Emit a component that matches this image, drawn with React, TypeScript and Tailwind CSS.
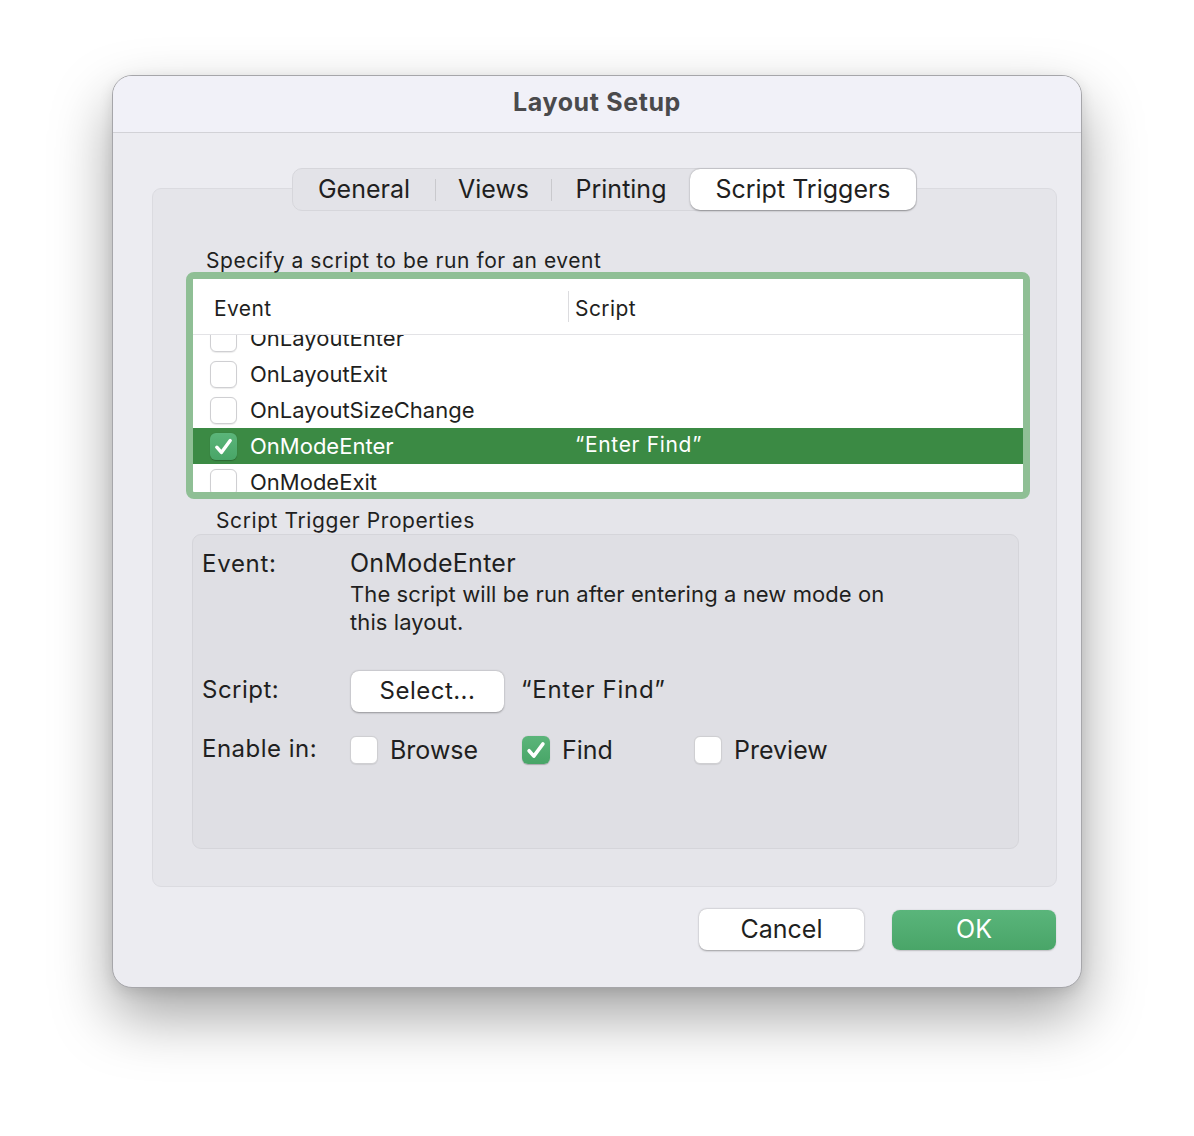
import React from "react";

const font = { fontFamily: "Inter, 'Noto Sans', sans-serif" };

function Check({ size = 27 }: { size?: number }) {
  return (
    <svg width={size} height={size} viewBox="0 0 27 27" className="block">
      <path d="M6.8 14.2 L11.4 19.4 L20.2 7.6" fill="none" stroke="white" strokeWidth="3.4" strokeLinecap="round" strokeLinejoin="round" />
    </svg>
  );
}

function Box({ checked, size }: { checked?: boolean; size: "s" | "m" }) {
  const dim = size === "s" ? "w-[27px] h-[27px]" : "w-[28px] h-[28px]";
  if (checked) {
    return (
      <div className={`${dim} shrink-0 rounded-[6px] bg-gradient-to-b from-[#5bb57a] to-[#48a567] shadow-[0_0.5px_1px_rgba(0,0,0,0.25)] flex items-center justify-center`}>
        <Check size={size === "s" ? 27 : 28} />
      </div>
    );
  }
  return (
    <div className={`${dim} shrink-0 rounded-[6px] bg-white border border-[#cfcfd2] shadow-[0_0.5px_1px_rgba(0,0,0,0.08)]`} />
  );
}

const rows = [
  { name: "OnLayoutEnter" },
  { name: "OnLayoutExit" },
  { name: "OnLayoutSizeChange" },
  { name: "OnModeEnter", checked: true, selected: true, script: "\u201cEnter Find\u201d" },
  { name: "OnModeExit" },
];

export default function App() {
  return (
    <div className="w-full h-[1136px] bg-white pt-[75px] pl-[112px] text-[#1f1f21]" style={font}>
      <div className="w-[970px] h-[913px] rounded-[20px] border border-[#a6a6aa] bg-[#ececf1] overflow-hidden shadow-[0_28px_60px_rgba(0,0,0,0.36),0_4px_14px_rgba(0,0,0,0.10)]">
        {/* title bar */}
        <div className="h-[57px] bg-[#f1f1f8] border-b border-[#d2d2d7] flex items-center justify-center pb-[4px]">
          <span className="text-[25px] font-bold text-[#4a4a4c] tracking-[0.025em] leading-none">Layout Setup</span>
        </div>

        <div className="pl-[39px] pt-[35px]">
          {/* tabs */}
          <div className="w-[905px] flex justify-center relative z-10">
            <div className="h-[43px] flex items-stretch rounded-[10px] border border-[#d6d6db] bg-[#e3e3e8] text-[25px] leading-none">
              <div className="w-[142px] flex items-center justify-center">General</div>
              <div className="w-px self-center h-[22px] bg-[#c9c9cd]" />
              <div className="w-[115px] flex items-center justify-center">Views</div>
              <div className="w-px self-center h-[22px] bg-[#c9c9cd]" />
              <div className="w-[138px] flex items-center justify-center">Printing</div>
              <div className="w-[226px] flex items-center justify-center bg-white rounded-[10px] shadow-[0_0.5px_2px_rgba(0,0,0,0.35)]">Script Triggers</div>
            </div>
          </div>

          {/* group box */}
          <div className="w-[905px] h-[699px] -mt-[23px] rounded-[9px] border border-[#dbdbe0] bg-[#e5e5ea] pt-[59px]">
            <div className="ml-[53px] h-[24px] text-[21px] leading-[26px] tracking-[0.026em]">Specify a script to be run for an event</div>

            {/* table */}
            <div className="ml-[33px] w-[844px] h-[227px] rounded-[8px] border-[7px] border-[#8fbf95] bg-white overflow-hidden flex flex-col">
              <div className="h-[56px] shrink-0 border-b border-[#e3e3e6] flex items-center text-[21px] relative z-10 bg-white pt-[4px]">
                <div className="w-[375px] pl-[21px] tracking-[0.02em]">Event</div>
                <div className="w-px h-[31px] bg-[#dcdcdf] -mt-[4px]" />
                <div className="pl-[6px] tracking-[0.02em]">Script</div>
              </div>
              <div className="flex-1 overflow-hidden">
                <div className="-mt-[15px]">
                  {rows.map((r) => (
                    <div
                      key={r.name}
                      className={`h-[36px] flex items-center text-[22px] ${r.selected ? "bg-[#3b8a44] text-white" : ""}`}
                    >
                      <div className="w-[382px] pl-[17px] flex items-center gap-[13px]">
                        <Box checked={r.checked} size="s" />
                        <span className="leading-none">{r.name}</span>
                      </div>
                      <span className="leading-none text-[21px] tracking-[0.032em] -mt-[3px]">{r.script ?? ""}</span>
                    </div>
                  ))}
                </div>
              </div>
            </div>

            <div className="ml-[63px] mt-[9px] h-[24px] text-[21px] leading-[26px] tracking-[0.028em]">Script Trigger Properties</div>

            {/* properties box */}
            <div className="ml-[39px] mt-[2px] w-[827px] h-[315px] rounded-[9px] border border-[#d5d5da] bg-[#dfdfe4] pl-[9px] pt-[15px]">
              <div className="flex items-center h-[28px]">
                <div className="w-[148px] text-[24px] tracking-[0.03em]">Event:</div>
                <div className="text-[25px] tracking-[0.01em]">OnModeEnter</div>
              </div>
              <div className="ml-[148px] mt-[2px] text-[22px] leading-[28px] tracking-[0.004em]">
                The script will be run after entering a new mode on
                <br />
                this layout.
              </div>

              <div className="mt-[35px] flex items-center h-[41px]">
                <div className="w-[149px] text-[24px] tracking-[0.02em] -mt-[4px]">Script:</div>
                <div className="w-[153px] h-[41px] rounded-[8px] bg-white shadow-[0_0.5px_2px_rgba(0,0,0,0.35)] flex items-center justify-center text-[24px] tracking-[0.02em] pb-[1px]">
                  Select...
                </div>
                <div className="ml-[17px] text-[24px] -mt-[3px] tracking-[0.03em]">{"\u201cEnter Find\u201d"}</div>
              </div>

              <div className="mt-[24px] flex items-center h-[28px]">
                <div className="w-[148px] text-[24px] tracking-[0.02em] -mt-[2px]">Enable in:</div>
                {[
                  { n: "Browse" },
                  { n: "Find", c: true },
                  { n: "Preview" },
                ].map((it) => (
                  <div key={it.n} className="w-[172px] flex items-center gap-[12px]">
                    <Box checked={it.c} size="m" />
                    <span className="text-[25px] leading-none">{it.n}</span>
                  </div>
                ))}
              </div>
            </div>
          </div>

          {/* buttons */}
          <div className="w-[904px] mt-[22px] flex justify-end items-start gap-[28px]">
            <div className="w-[165px] h-[41px] rounded-[8px] bg-white shadow-[0_0.5px_2px_rgba(0,0,0,0.35)] flex items-center justify-center text-[25px]">
              Cancel
            </div>
            <div className="w-[164px] h-[40px] mt-px rounded-[8px] bg-gradient-to-b from-[#5ab57b] to-[#49a568] shadow-[0_0.5px_1.5px_rgba(0,0,0,0.2)] flex items-center justify-center text-[25px] text-white">
              OK
            </div>
          </div>
        </div>
      </div>
    </div>
  );
}
